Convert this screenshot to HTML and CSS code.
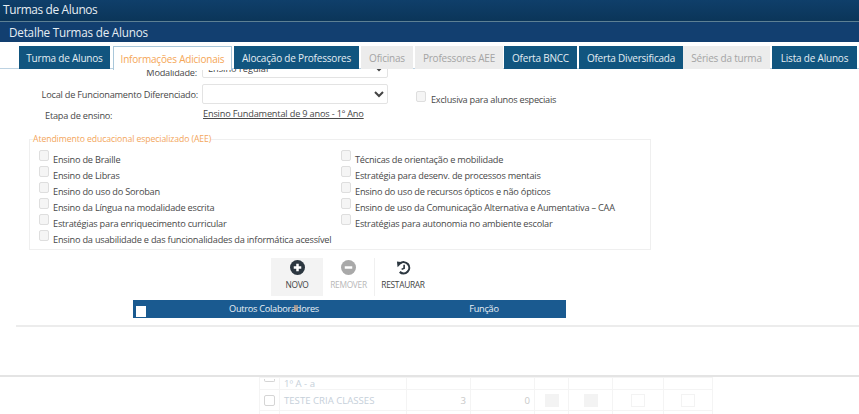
FILE: index.html
```html
<!DOCTYPE html>
<html lang="pt-BR">
<head>
<meta charset="utf-8">
<title>Turmas de Alunos</title>
<link rel="stylesheet" href="styles.css">
</head>
<body>
<header class="title-bar">Turmas de Alunos</header>
<div class="sub-bar">Detalhe Turmas de Alunos</div>
<nav class="tabs">
  <a class="tab w1">Turma de Alunos</a>
  <a class="tab w2 active">Informações Adicionais</a>
  <a class="tab w3">Alocação de Professores</a>
  <a class="tab w4 off">Oficinas</a>
  <a class="tab w5 off">Professores AEE</a>
  <a class="tab w6">Oferta BNCC</a>
  <a class="tab w7">Oferta Diversificada</a>
  <a class="tab w8 off">Séries da turma</a>
  <a class="tab w9">Lista de Alunos</a>
</nav>
<main class="panel">
  <div class="form">
    <label class="lbl mod">Modalidade:</label>
    <select class="sel"><option>Ensino regular</option></select>
    <span></span>
    <label class="lbl">Local de Funcionamento Diferenciado:</label>
    <select class="sel"><option></option></select>
    <label class="check exclusive"><input type="checkbox" class="box"><span>Exclusiva para alunos especiais</span></label>
    <span class="lbl left">Etapa de ensino:</span>
    <a class="etapa">Ensino Fundamental de 9 anos - 1º Ano</a>
  </div>
  <fieldset class="aee">
    <legend>Atendimento educacional especializado (AEE)</legend>
    <div class="col">
      <label class="check"><input type="checkbox" class="box"><span>Ensino de Braille</span></label>
      <label class="check"><input type="checkbox" class="box"><span>Ensino de Libras</span></label>
      <label class="check"><input type="checkbox" class="box"><span>Ensino do uso do Soroban</span></label>
      <label class="check"><input type="checkbox" class="box"><span>Ensino da Língua na modalidade escrita</span></label>
      <label class="check"><input type="checkbox" class="box"><span>Estratégias para enriquecimento curricular</span></label>
      <label class="check"><input type="checkbox" class="box"><span>Ensino da usabilidade e das funcionalidades da informática acessível</span></label>
    </div>
    <div class="col">
      <label class="check"><input type="checkbox" class="box"><span>Técnicas de orientação e mobilidade</span></label>
      <label class="check"><input type="checkbox" class="box"><span>Estratégia para desenv. de processos mentais</span></label>
      <label class="check"><input type="checkbox" class="box"><span>Ensino do uso de recursos ópticos e não ópticos</span></label>
      <label class="check"><input type="checkbox" class="box"><span>Ensino de uso da Comunicação Alternativa e Aumentativa – CAA</span></label>
      <label class="check"><input type="checkbox" class="box"><span>Estratégias para autonomia no ambiente escolar</span></label>
    </div>
  </fieldset>
  <div class="toolbar">
    <button class="tool hover">
      <svg class="ico" viewBox="0 0 24 24"><circle cx="12" cy="12" r="12" fill="#2c3740"/><path d="M12 6v12M6 12h12" stroke="#fff" stroke-width="4"/></svg>
      <span>NOVO</span>
    </button>
    <button class="tool dis">
      <svg class="ico" viewBox="0 0 24 24"><circle cx="12" cy="12" r="12" fill="#a9a9a9"/><path d="M6 12h12" stroke="#fff" stroke-width="4"/></svg>
      <span>REMOVER</span>
    </button>
    <button class="tool wide">
      <svg class="ico" viewBox="0 0 24 24"><path d="M6.5 5.5A9 9 0 1 1 6 19" fill="none" stroke="#2c3740" stroke-width="3.4"/><path d="M1.5 2.5l9 1-8 8z" fill="#2c3740"/><path d="M13 7.5v5.5l-4 2" fill="none" stroke="#2c3740" stroke-width="2.6"/></svg>
      <span>RESTAURAR</span>
    </button>
  </div>
  <div class="grid-head">
    <input type="checkbox" class="head-box">
    <span>Outros Colaboradores<i class="cursor"></i></span>
    <span>Função</span>
  </div>
</main>
<div class="rule"></div>
<section class="behind">
  <table class="faded">
    <tr class="r1"><td><i class="fbox up"></i></td><td>1º A - a</td><td class="n"></td><td class="n"></td><td></td><td></td><td></td><td></td></tr>
    <tr class="r2"><td><i class="fbox"></i></td><td>TESTE CRIA CLASSES</td><td class="n">3</td><td class="n">0</td><td><i class="fsq"></i></td><td><i class="fsq"></i></td><td><i class="fout"></i></td><td><i class="fout"></i></td></tr>
    <tr class="r3"><td></td><td></td><td></td><td></td><td></td><td></td><td></td><td></td></tr>
  </table>
</section>
</body>
</html>
```

FILE: styles.css
```css
* { box-sizing: border-box; }
html, body { margin: 0; height: 414px; overflow: hidden; background: #fff; }
body { font-family: "Open Sans", "Noto Sans", sans-serif; font-size: 9.2px; color: #484848; letter-spacing: -0.22px; }

.title-bar {
  height: 22px; padding-left: 3px; line-height: 18px;
  font-size: 11.9px; letter-spacing: -0.35px; color: #e6edf3;
  background: linear-gradient(#0f3f6a, #0b3559);
  border-bottom: 1px solid #5d8094;
}
.sub-bar {
  height: 20px; padding-left: 9px; line-height: 20px;
  font-size: 11.7px; letter-spacing: -0.2px; color: #e6edf3;
  background: #123f70;
}
.tabs {
  display: flex; height: 27px; padding: 4px 0 0 19px;
  font-size: 10px; letter-spacing: -0.2px;
  position: relative; z-index: 2;
  background: linear-gradient(#fff 26px, #bcd2e2 26px);
}
.tab {
  display: flex; align-items: center; justify-content: center;
  height: 23px; color: #e4edf3; background: #11557f;
}
.tab.active { color: #f5a656; background: #fff; border: 1px solid #a9c7da; border-bottom: 0; height: 24px; }
.tab.off { color: #a4a4a4; background: #ececec; }
.w1 { width: 91px; }
.w2 { width: 119px; margin-left: 3px; }
.w3 { width: 125px; margin-left: 2px; }
.w4 { width: 52px; margin-left: 2px; }
.w5 { width: 88px; margin-left: 2px; }
.w6 { width: 73px; margin-left: 1px; }
.w7 { width: 104px; margin-left: 2px; }
.w8 { width: 87px; }
.w9 { width: 85px; margin-left: 2px; }

.panel { height: 256px; overflow: hidden; }
.form {
  display: grid; grid-template-columns: 202px 186px auto;
  grid-template-rows: 20px 20px 14px; row-gap: 6px;
  margin-top: -11px;
}
.lbl { text-align: right; padding-right: 4px; align-self: center; white-space: nowrap; }
.lbl.mod { padding-top: 8px; padding-right: 5px; }
.lbl.left { text-align: left; padding-left: 45px; margin-top: -3px; }
.sel {
  width: 186px; height: 20px; padding: 0 1px;
  font: inherit; color: #444; background: #fff;
  border: 1px solid #e3e3e3; border-radius: 2px;
}
.etapa { text-decoration: underline; white-space: nowrap; align-self: start; margin-top: -3px; padding-left: 1px; letter-spacing: -0.18px; }

.check { display: flex; align-items: flex-start; gap: 4px; height: 16px; white-space: nowrap; }
.check span { padding-top: 3px; line-height: 13px; }
.box {
  appearance: none; margin: 0; width: 10px; height: 11px; flex: none;
  background: #f5f5f5; border: 1px solid #dedede; border-radius: 2px;
}
.exclusive { margin: 7px 0 0 28px; gap: 5px; }
.exclusive span { padding-top: 2px; letter-spacing: -0.25px; }

.aee {
  display: flex; margin: 9px 0 0 29px; padding: 0 0 0 9px; width: 622px; height: 117px;
  border: 1px solid #efefef;
}
.aee legend { padding: 0; margin-left: -6px; font-size: 8.7px; letter-spacing: -0.1px; color: #f3a65c; line-height: 12px; }
.col { width: 302px; padding-top: 5px; }

.toolbar { display: flex; margin: 8px 0 0 271px; height: 38px; }
.tool {
  display: flex; flex-direction: column; align-items: center; gap: 4px;
  width: 52px; padding: 2px 0 0; background: none; border: 0;
  font: inherit; font-size: 8.4px; letter-spacing: -0.3px; color: #444;
}
.tool.hover { background: #f3f3f3; }
.tool.dis { color: #b8b8b8; border-right: 1px solid #f0f0f0; }
.tool.wide { width: 56px; }
.ico { width: 15px; height: 15px; display: block; }

.grid-head {
  display: grid; grid-template-columns: 13px 254px 166px; align-items: center;
  width: 433px; height: 18px; margin: 4px 0 0 133px; padding-bottom: 1px;
  background: #1a5a90; color: #e8eff5; text-align: center; letter-spacing: -0.27px;
}
.head-box {
  appearance: none; margin: 6px 0 0 3px; width: 10px; height: 11px;
  background: #fff; border: 0;
}
.grid-head span { position: relative; left: 1px; }
.cursor {
  position: absolute; left: 147px; top: 3px; width: 4px; height: 6px;
  background: #c9a48a; opacity: .7;
}

.rule { height: 2px; margin-left: 16px; background: #ececec; }
.behind {
  margin-top: 48px; height: 39px; overflow: hidden;
  border-top: 2px solid #e4e4e4; padding-left: 259px;
}
.faded { border-collapse: collapse; table-layout: fixed; width: 453px; font-size: 9.6px; letter-spacing: 0; line-height: 11px; color: #c6d0da; }
.faded td { border: 1px solid #f4f4f4; padding: 0 4px; overflow: hidden; white-space: nowrap; }
.faded td:nth-child(1) { width: 20px; padding: 0; }
.faded td:nth-child(2) { width: 127px; }
.faded td:nth-child(3), .faded td:nth-child(4) { width: 64px; }
.faded td:nth-child(5) { width: 34px; }
.faded td:nth-child(6) { width: 44px; }
.faded td:nth-child(7) { width: 51px; }
.faded td:nth-child(8) { width: 49px; }
.faded .n { text-align: right; color: #c9c9c9; }
.r1 td { height: 10px; }
.r2 td { height: 21px; }
.r3 td { height: 12px; }
.fbox { display: block; width: 11px; height: 11px; margin: 0 auto; border: 1px solid #d5d5d5; border-radius: 2px; }
.fbox.up { height: 3px; border-top: 0; margin-bottom: 7px; border-radius: 0 0 2px 2px; }
.fsq { display: block; width: 14px; height: 13px; margin: 0 auto; background: #f3f3f3; }
.fout { display: block; width: 14px; height: 13px; margin: 0 auto; border: 1px solid #f3f3f3; }
```
